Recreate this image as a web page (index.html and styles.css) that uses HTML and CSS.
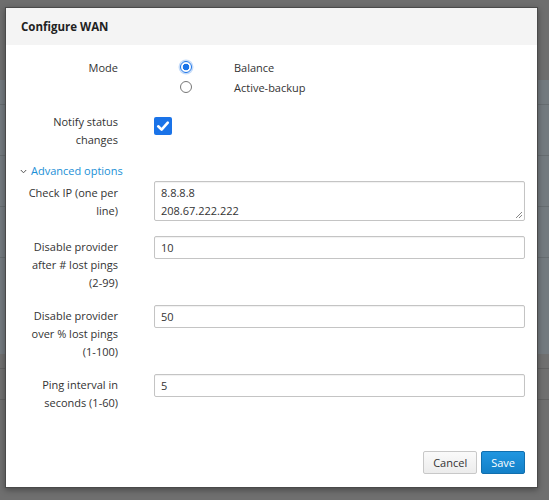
FILE: index.html
```html
<!DOCTYPE html>
<html>
<head>
<meta charset="utf-8">
<link rel="stylesheet" href="styles.css">
</head>
<body>
<div class="page">
  <div class="page-top"></div>
  <div class="page-panel">
    <div class="page-row"></div>
    <div class="page-row"></div>
    <div class="page-row"></div>
    <div class="page-row"></div>
  </div>
  <div class="page-bottom">
    <div class="page-line"></div>
    <div class="page-line"></div>
  </div>
</div>

<div class="modal">
  <div class="modal-header">Configure WAN</div>
  <div class="modal-body">
    <div class="row row-mode">
      <div class="label">Mode</div>
      <div class="value radios">
        <div class="radio-opt"><span class="radio checked"></span><span class="radio-text">Balance</span></div>
        <div class="radio-opt"><span class="radio"></span><span class="radio-text">Active-backup</span></div>
      </div>
    </div>
    <div class="row row-notify">
      <div class="label">Notify status changes</div>
      <div class="value">
        <span class="checkbox"><svg width="18" height="18" viewBox="0 0 18 18"><path d="M4.2 9.3 L7.6 12.6 L13.8 5.6" fill="none" stroke="#fff" stroke-width="2.6" stroke-linecap="round" stroke-linejoin="round"/></svg></span>
      </div>
    </div>
    <div class="advanced">
      <svg class="chev" width="7" height="5" viewBox="0 0 7 5"><path d="M0.8 1 L3.5 3.8 L6.2 1" fill="none" stroke="#555" stroke-width="1"/></svg>
      <span class="adv-link">Advanced options</span>
    </div>
    <div class="row row-field row-ta">
      <div class="label">Check IP (one per line)</div>
      <div class="value"><div class="textarea"><div>8.8.8.8</div><div>208.67.222.222</div><svg class="grip" width="8" height="8" viewBox="0 0 8 8"><path d="M7 1 L1 7 M7 4 L4 7" stroke="#888" stroke-width="1"/></svg></div></div>
    </div>
    <div class="row row-field">
      <div class="label">Disable provider after # lost pings (2-99)</div>
      <div class="value"><div class="input">10</div></div>
    </div>
    <div class="row row-field">
      <div class="label">Disable provider over % lost pings (1-100)</div>
      <div class="value"><div class="input">50</div></div>
    </div>
    <div class="row row-field">
      <div class="label">Ping interval in seconds (1-60)</div>
      <div class="value"><div class="input">5</div></div>
    </div>
  </div>
  <div class="modal-footer">
    <button class="btn btn-cancel">Cancel</button>
    <button class="btn btn-save">Save</button>
  </div>
</div>
</body>
</html>
```

FILE: styles.css
```css
html, body {
  margin: 0;
  padding: 0;
}
body {
  background: #6f6f6f;
  font-family: "Open Sans", "Liberation Sans", sans-serif;
  font-size: 11px;
  color: #333;
  width: 549px;
  height: 500px;
  overflow: hidden;
  position: relative;
}

/* dimmed page behind the dialog */
.page {
  display: flex;
  flex-direction: column;
}
.page-top {
  height: 80px;
  background: #6e6e6e;
}
.page-panel {
  height: 250px;
  background: #737a7f;
  display: flex;
  flex-direction: column;
  padding-top: 24px;
  gap: 50px;
}
.page-row {
  height: 1px;
  background: #666c70;
}
.page-bottom {
  flex: 1;
  height: 170px;
  background: #707070;
  display: flex;
  flex-direction: column;
  padding-top: 14px;
  gap: 30px;
}
.page-line {
  height: 1px;
  background: #626262;
}

/* dialog */
.modal {
  position: absolute;
  left: 5px;
  top: 7px;
  width: 531px;
  height: 479px;
  background: #fff;
  border: 1px solid #4a4a4a;
  box-shadow: 0 2px 6px rgba(0,0,0,0.35);
  display: flex;
  flex-direction: column;
}
.modal-header {
  background: #f4f4f4;
  height: 37px;
  box-sizing: border-box;
  padding: 10px 0 0 15px;
  font-weight: bold;
  font-size: 11.5px;
  color: #222;
  line-height: 17px;
}
.modal-body {
  flex: 1;
  padding: 13px 12px 0 10px;
  display: flex;
  flex-direction: column;
}
.row {
  display: grid;
  grid-template-columns: 102px 1fr;
  column-gap: 36px;
}
.label {
  text-align: right;
  line-height: 18px;
}
.row-mode .label {
  padding-top: 1px;
}
.radios {
  display: flex;
  flex-direction: column;
  gap: 2px;
}
.radio-opt {
  display: flex;
  align-items: center;
  height: 18px;
}
.radio {
  border: 1px solid #777;
  border-radius: 50%;
  margin-left: 26px;
  box-sizing: border-box;
  width: 12px;
  height: 12px;
  margin-top: -1px;
}
.radio.checked {
  border: 1px solid #1a73e8;
  background: radial-gradient(circle, #1a73e8 0 3px, #fff 3.6px);
  box-shadow: 0 0 0 1.5px rgba(26,115,232,0.25);
}
.radio-text {
  margin-left: 42px;
  padding-top: 1px;
}
.row-notify {
  margin-top: 17px;
}
.checkbox {
  display: block;
  width: 18px;
  height: 18px;
  margin-top: 4px;
  background: #1a73e8;
  border-radius: 2px;
}
.checkbox svg {
  display: block;
}
.advanced {
  margin-top: 13px;
  height: 18px;
  display: flex;
  align-items: center;
  padding-left: 4px;
}
.chev {
  margin-right: 4px;
}
.adv-link {
  color: #1a8fd6;
  line-height: 18px;
}
.row-field {
  margin-top: 13px;
}
.advanced + .row-field {
  margin-top: 1px;
}
.row-ta {
  margin-bottom: 2px;
}
.row-field .label {
  padding-top: 2px;
}
.row-ta .label {
  padding-top: 3px;
}
.textarea {
  position: relative;
  height: 40px;
  box-sizing: border-box;
  border: 1px solid #c4c4c4;
  border-radius: 2px;
  box-shadow: inset 0 1px 1px rgba(0,0,0,0.06);
  padding: 2px 6px;
  line-height: 18px;
}
.grip {
  position: absolute;
  right: 1px;
  bottom: 1px;
}
.input {
  height: 23px;
  box-sizing: border-box;
  border: 1px solid #c4c4c4;
  border-radius: 2px;
  box-shadow: inset 0 1px 1px rgba(0,0,0,0.06);
  padding: 0 6px;
  line-height: 21px;
}
.modal-footer {
  display: flex;
  justify-content: flex-end;
  gap: 4px;
  padding: 0 12px 13px 0;
}
.btn {
  font-family: "Open Sans", "Liberation Sans", sans-serif;
  font-size: 11px;
  height: 23px;
  border-radius: 2px;
  padding: 0 9px;
  line-height: 21px;
}
.btn-cancel {
  background: linear-gradient(#fafafa, #ececec);
  border: 1px solid #c8c8c8;
  color: #333;
}
.btn-save {
  background: linear-gradient(#2196e0, #1380c8);
  border: 1px solid #116fae;
  color: #fff;
}
```
